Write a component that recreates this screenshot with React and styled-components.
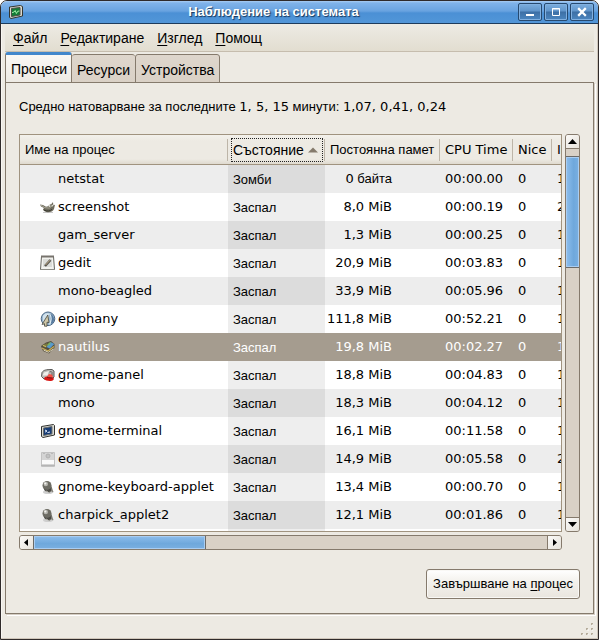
import React from "react";
import styled, { createGlobalStyle } from "styled-components";

const latin = '"DejaVu Sans", sans-serif';
const cyrillic = '"Liberation Sans", sans-serif';

const GlobalStyle = createGlobalStyle`
  * { box-sizing: border-box; }
  body { margin: 0; background: #fff; color: #000; font: 13px/18px ${cyrillic}; }
  button { font: inherit; color: inherit; margin: 0; padding: 0; border: 0; background: none; }
  u { text-decoration-thickness: 1px; text-underline-offset: 2px; text-decoration-skip-ink: none; }
`;

const Window = styled.main`
  min-height: 100vh;
  display: flex;
  flex-direction: column;
  background: #edeae3;
  border: 1px solid #2f2a2a;
  border-radius: 7px 7px 0 0;
  box-shadow: inset -1px -1px #cfc6ba, inset 1px 0 #f8f6f2;
  overflow: hidden;
`;

const TitleBar = styled.header`
  display: grid;
  grid-template-columns: 22px 1fr 77px;
  align-items: center;
  height: 23px;
  padding: 0 4px 0 7px;
  background: linear-gradient(#a9ccf2 0, #80b3ea 2px, #69a3e0 10px, #4b90d5 12px, #5296d8 100%);
  border-bottom: 1px solid #1d3b5c;
`;

const Title = styled.h1`
  margin: 0;
  text-align: center;
  font: bold 13px/20px ${cyrillic};
  color: #fff;
  text-shadow: 1px 1px 1px #16365a;
  white-space: nowrap;
`;

const WindowButtons = styled.div`
  display: flex;
  gap: 2px;
  justify-content: flex-end;
`;

const WindowButton = styled.button`
  width: 24px;
  height: 18px;
  border: 1px solid #26496f;
  border-radius: 2px;
  background: linear-gradient(#7badde 0, #6095cb 7px, #3d6fa5 8px, #4b86c0 100%);
  box-shadow: inset 0 0 0 1px #81b0e0;
  svg { display: block; margin: auto; }
`;

const MenuBar = styled.nav`
  display: flex;
  gap: 13px;
  align-items: center;
  height: 28px;
  margin: 0 4px;
  padding: 0 8px;
  background: linear-gradient(#edebe4, #e2ddd0);
  border-bottom: 1px solid #c6bdae;
`;

const MenuItem = styled.button`
  font-size: 14px;
  line-height: 20px;
`;

const Notebook = styled.section`
  flex: 1;
  display: flex;
  flex-direction: column;
  margin: 0 4px;
`;

const TabStrip = styled.div`
  display: flex;
  align-items: flex-end;
  height: 31px;
  margin-bottom: -1px;
`;

const Tab = styled.button`
  height: ${(p) => (p.$active ? 31 : 29)}px;
  padding: ${(p) => (p.$active ? "0 4px 0 5px" : "3px 5px 0")};
  font-size: 14px;
  border: 1px solid #857a6c;
  border-left-width: ${(p) => (p.$active || p.$last ? 1 : 0)}px;
  border-right-width: ${(p) => (p.$active || p.$last ? 1 : 0)}px;
  border-radius: 3px 3px 0 0;
  background: linear-gradient(#ded6cc, #dad1c6);
  ${(p) => p.$active && `
    border-top: 3px solid #4287cc;
    border-bottom: 0;
    background: linear-gradient(#faf8f5, #edeae3);
  `}
`;

const Panel = styled.div`
  flex: 1;
  display: flex;
  flex-direction: column;
  padding: 14px 13px;
  border: 1px solid #857a6c;
  box-shadow: 1px 1px #d5cec4, 2px 2px #fff;
`;

const LoadAverage = styled.p`
  height: 20px;
  margin: 0 0 17px;
  line-height: 20px;
  white-space: nowrap;
`;

const Latin = styled.span`
  font-family: ${latin};
`;

const ScrollArea = styled.div`
  display: grid;
  grid-template-columns: minmax(0, 1fr) 15px;
  gap: 3px;
`;

const Viewport = styled.div`
  overflow: hidden;
  border: 1px solid #a0937f;
  background: #fff;
`;

const ProcessTable = styled.table`
  width: 680px;
  table-layout: fixed;
  border-collapse: separate;
  border-spacing: 0;
  white-space: nowrap;
`;

const Column = styled.col`
  width: ${(p) => p.$width}px;
`;

const HeaderCell = styled.th`
  height: 30px;
  padding: 0;
  text-align: left;
  font-weight: normal;
  background: linear-gradient(#f3f1ec 0, #edeae3 6px, #edeae3 24px, #dfdacf 100%);
  border-bottom: 1px solid #a0937f;
`;

const HeaderButton = styled.button`
  display: flex;
  align-items: center;
  justify-content: space-between;
  width: 100%;
  height: 22px;
  padding: 0 3px 0 5px;
  border-right: 1px solid #bdb5a8;
  box-shadow: 1px 0 #fff;
`;

const SortFocus = styled.span`
  flex: 1;
  display: flex;
  align-items: center;
  justify-content: space-between;
  height: 24px;
  margin: 0 -2px;
  padding: 0 4px 0 1px;
  border: 1px dotted #222;
  font-size: 14px;
`;

const Row = styled.tr`
  height: 28px;
  background: ${(p) => (p.$selected ? "#a59c8f" : p.$shade ? "#ededed" : "#fff")};
  color: ${(p) => (p.$selected ? "#fff" : "#000")};
  td:nth-child(2) {
    background: ${(p) => (p.$selected ? "#a59c8f" : p.$shade ? "#dcdcdc" : "#eee")};
  }
`;

const FillerRow = styled(Row)`
  height: 2px;
`;

const Cell = styled.td`
  padding: ${(p) => (p.$align === "right" ? "0 48px 0 0" : "0 0 0 5px")};
  text-align: ${(p) => p.$align || "left"};
  font: 13px/18px ${latin};
`;

const StateCell = styled(Cell)`
  padding: 1px 0 0 5px;
  font: 13px/18px ${cyrillic};
`;

const Cyrillic = styled.span`
  font: 13px/18px ${cyrillic};
`;

const ProcessName = styled.div`
  display: flex;
  align-items: center;
  gap: 2px;
  padding-left: 15px;
`;

const IconSlot = styled.span`
  width: 16px;
  height: 16px;
  svg { display: block; }
`;

const Scrollbar = styled.div`
  display: flex;
  flex-direction: ${(p) => (p.$vertical ? "column" : "row")};
  ${(p) => (p.$vertical ? "width" : "height")}: 15px;
  border: 1px solid #857a6c;
  border-radius: 3px;
  overflow: hidden;
  background: #d9d1c6;
`;

const Arrow = styled.button`
  flex: 0 0 13px;
  display: flex;
  align-items: center;
  justify-content: center;
  background: linear-gradient(135deg, #fbfaf8, #e6e2da);
`;

const Trough = styled.div`
  flex: 1;
  display: grid;
  ${(p) => (p.$vertical ? "grid-template-rows" : "grid-template-columns")}: ${(p) => p.$parts};
  border: 0 solid #857a6c;
  border-width: ${(p) => (p.$vertical ? "1px 0" : "0 1px")};
`;

const Thumb = styled.div`
  border: 1px solid #a9cdf2;
  background: linear-gradient(${(p) => (p.$vertical ? "90deg" : "180deg")}, #8abbea, #6fa8dc 60%, #78aee0);
  box-shadow: 0 0 0 1px #6a6a68;
  ${(p) => (p.$vertical ? "grid-row: 2" : "grid-column: 1")};
`;

const Actions = styled.div`
  display: flex;
  justify-content: flex-end;
  margin-top: auto;
`;

const ActionButton = styled.button`
  height: 30px;
  padding: 0 6px;
  border: 1px solid #857a6c;
  border-radius: 3px;
  background: linear-gradient(#fff, #f3f1ec 12px, #e9e5de);
  box-shadow: inset 0 0 0 1px #f9f8f5;
  white-space: nowrap;
`;

const StatusBar = styled.footer`
  display: flex;
  align-items: flex-end;
  justify-content: flex-end;
  height: 25px;
  padding: 0 5px 4px;
  svg { display: block; }
`;

const MonitorIcon = () => (
  <svg width="16" height="16" viewBox="0 0 16 16" aria-hidden="true">
    <path d="M1.500 3 12.500 1.500l2 1V12L3 14.500l-1.500-1z" fill="#d9d8cf" stroke="#34352f" />
    <path d="M3.500 4.500 12 3.500v7.500l-8.500 1.500z" fill="#137d36" stroke="#4d4f46" />
    <path d="M4 8.600 6 8l1.200-1.500 1.200 3 1.400-2.300 1.700-.2" fill="none" stroke="#a5f0a9" />
  </svg>
);

const GimpIcon = () => (
  <svg width="16" height="16" viewBox="0 0 16 16">
    <path d="M3 13.500h10" stroke="#c8c8c8" />
    <path d="M0 5.500 3 6l3 1.700 2-.4 2.200-2L11 5.500l2-2.500.3 3.200 1.700-.5-1 4.200c-1 2.400-3 3.300-6 3.300-2.500 0-4.700-1.100-5.100-2.600L4 9 1 7.400z" fill="#6e6b5d" />
    <path d="m1 6.200 4 2.500 4.300.4L12 7" stroke="#a8a594" fill="none" />
    <circle cx="9.500" cy="7" r="1" fill="#e2e1d8" /><circle cx="12.400" cy="6.600" r=".9" fill="#deddd3" />
    <path d="M4 11c3 1.600 6 1.200 8-.6" stroke="#39382f" fill="none" />
  </svg>
);

const EditIcon = () => (
  <svg width="16" height="16" viewBox="0 0 16 16">
    <path d="M1.500 1.500h12l1 13H.5z" fill="#f2f2ee" stroke="#66665f" />
    <path d="M1 1.500h13" stroke="#77736d" strokeWidth="2" />
    <path d="M3 4h9v8H3z" fill="#dbdcd8" />
    <path d="m5 11 5.500-6" stroke="#55534d" strokeWidth="2.500" />
    <path d="m5.500 10 4.500-4.800" stroke="#c5b18b" />
    <path d="M1 14.500h14" stroke="#8d8d86" />
  </svg>
);

const GlobeIcon = () => (
  <svg width="16" height="16" viewBox="0 0 16 16">
    <circle cx="8" cy="7.800" r="6.800" fill="#9dbad2" stroke="#4c6885" />
    <path d="M9.500 2.200c4 1.800 5.200 5 4 9L11 13z" fill="#55799e" />
    <path d="M3 4.500C5 2 7.500 2 9 2.500v3L3 11z" fill="#d2e2ec" />
    <path d="M9.500 2.500c2 3 2 7 0 11" fill="none" stroke="#e0edf2" strokeWidth="1.200" />
    <path d="M7.800 4 2 13.500l2.500-.8v2.500H7v-4l2 .4z" fill="#cfc7a8" stroke="#4a4a40" strokeWidth=".8" />
  </svg>
);

const NautilusIcon = () => (
  <svg width="16" height="16" viewBox="0 0 16 16">
    <path d="m1 7 5-3.500 5-1.500 3.500 3v4L9 14.500l-6-2.500z" fill="#554e3d" />
    <path d="m2 6.500 4.500-2.300 3.200 1.500-4 3z" fill="#77763f" />
    <path d="m6.500 8 4-5 3.800 2-4.500 4.500z" fill="#589bcd" />
    <path d="m7 6.500 2-3h2L9.500 6z" fill="#7cb55a" />
    <path d="m2 9 6 3 6-4.500" stroke="#c8ad58" fill="none" strokeWidth="1.300" />
    <path d="m3.500 11 5 2.300L13.500 10" stroke="#d9d3bd" fill="none" />
    <path d="m3 6.500 3 1" stroke="#d8c468" />
  </svg>
);

const PanelIcon = () => (
  <svg width="16" height="16" viewBox="0 0 16 16">
    <path d="M2 5.500C3.500 3 6 2.500 12 2.500l2 1.500v6L12 12H4L1.500 9.500z" fill="#bbb9b4" stroke="#5b5a58" />
    <path d="M2.500 8.500 4 5.500l5-1.500-1.500 4.500z" fill="#efeeea" />
    <path d="m9.500 5 2-.5M12 5v4" stroke="#65625f" />
    <path d="M7 9.500 9 7l3.200.8 1 3.200z" fill="#f65045" />
    <path d="M4 12c.5-2 2-2.700 4-2.300l5.500 1.300c1 1.500-.5 3-3.500 3-3 0-5-.7-6-2z" fill="#d91614" />
    <path d="M7 10.200c2 .8 4 .8 5.500.6" stroke="#751814" fill="none" />
  </svg>
);

const TerminalIcon = () => (
  <svg width="16" height="16" viewBox="0 0 16 16">
    <path d="M1.500 3.500 13.500 1.500l1 1v9.500L3 14.500l-1.500-1z" fill="#dbdbd5" stroke="#32332f" />
    <path d="M3.500 5 12 3.500V11l-8.500 1.500z" fill="#173c75" stroke="#6c706e" />
    <path d="m5 7 2 1-2 1.200M7.500 9.500 10 9" stroke="#e9f1ff" fill="none" />
  </svg>
);

const EogIcon = () => (
  <svg width="16" height="16" viewBox="0 0 16 16">
    <path d="M1.500 1.500h13v14h-13z" fill="#d4d4d4" stroke="#c2c2c2" />
    <path d="M2 9h12v4H2z" fill="#fafafa" />
    <path d="M1 14.500h14" stroke="#b5b5b5" />
    <circle cx="8" cy="5" r="2" fill="#c2c2c2" stroke="#b0b0b0" />
    <path d="M3 2.500h2m6 0h2" stroke="#b8b8b8" fill="none" />
  </svg>
);

const AppletIcon = () => (
  <svg width="16" height="16" viewBox="0 0 16 16">
    <ellipse cx="8" cy="13" rx="5" ry="2" fill="#cfcfcf" />
    <path d="M11 6c1 2 1.500 5 2.500 7-1 .5-1.500.2-2-.7L9 14l-2-3z" fill="#85847c" />
    <circle cx="7" cy="6.500" r="4.500" fill="#6d6c64" />
    <path d="M3 8c2 3.500 6.500 3.500 8.500 0L11 12c-2 1.500-4.500 1.500-6.500-.7z" fill="#4b4a45" />
    <circle cx="5.800" cy="5" r="2.200" fill="#b6b5af" /><circle cx="5.300" cy="4.500" r="1.100" fill="#f3f3ef" />
    <path d="m6 12 2 1" stroke="#bab8b0" />
  </svg>
);

const arrows = {
  up: "M0 6h9L4.500 1z",
  down: "M0 1h9L4.500 6z",
  left: "M6 0v7L2 3.500z",
  right: "M3 0v7l4-3.500z",
};

const ArrowButton = ({ direction, label }) => (
  <Arrow type="button" aria-label={label}>
    <svg width="9" height="7" viewBox="0 0 9 7"><path d={arrows[direction]} /></svg>
  </Arrow>
);

const processes = [
  { name: "netstat", memory: "0", cpu: "00:00.00", id: "1" },
  { name: "screenshot", Icon: GimpIcon, memory: "8,0 MiB", cpu: "00:00.19", id: "2" },
  { name: "gam_server", memory: "1,3 MiB", cpu: "00:00.25", id: "1" },
  { name: "gedit", Icon: EditIcon, memory: "20,9 MiB", cpu: "00:03.83", id: "1" },
  { name: "mono-beagled", memory: "33,9 MiB", cpu: "00:05.96", id: "1" },
  { name: "epiphany", Icon: GlobeIcon, memory: "111,8 MiB", cpu: "00:52.21", id: "1" },
  { name: "nautilus", Icon: NautilusIcon, memory: "19,8 MiB", cpu: "00:02.27", id: "1", selected: true },
  { name: "gnome-panel", Icon: PanelIcon, memory: "18,8 MiB", cpu: "00:04.83", id: "1" },
  { name: "mono", memory: "18,3 MiB", cpu: "00:04.12", id: "1" },
  { name: "gnome-terminal", Icon: TerminalIcon, memory: "16,1 MiB", cpu: "00:11.58", id: "1" },
  { name: "eog", Icon: EogIcon, memory: "14,9 MiB", cpu: "00:05.58", id: "2" },
  { name: "gnome-keyboard-applet", Icon: AppletIcon, memory: "13,4 MiB", cpu: "00:00.70", id: "1" },
  { name: "charpick_applet2", Icon: AppletIcon, memory: "12,1 MiB", cpu: "00:01.86", id: "1" },
];

const columnWidths = [208, 97, 115, 73, 39, 148];

export default function App() {
  return (
    <>
      <GlobalStyle />
      <Window>
        <TitleBar>
          <MonitorIcon />
          <Title>Наблюдение на системата</Title>
          <WindowButtons>
            <WindowButton type="button" aria-label="Минимизиране">
              <svg width="12" height="12" viewBox="0 0 12 12"><path d="M2 8h8v2H2z" fill="#fff" /></svg>
            </WindowButton>
            <WindowButton type="button" aria-label="Максимизиране">
              <svg width="12" height="12" viewBox="0 0 12 12"><path d="M2.500 2.500h7v7h-7zM2 3h8" fill="none" stroke="#fff" /></svg>
            </WindowButton>
            <WindowButton type="button" aria-label="Затваряне">
              <svg width="12" height="12" viewBox="0 0 12 12"><path d="m3 3 6 6m0-6L3 9" stroke="#fff" strokeWidth="2.300" strokeLinecap="square" /></svg>
            </WindowButton>
          </WindowButtons>
        </TitleBar>

        <MenuBar>
          <MenuItem type="button"><u>Ф</u>айл</MenuItem>
          <MenuItem type="button"><u>Р</u>едактиране</MenuItem>
          <MenuItem type="button"><u>И</u>зглед</MenuItem>
          <MenuItem type="button"><u>П</u>омощ</MenuItem>
        </MenuBar>

        <Notebook>
          <TabStrip role="tablist">
            <Tab type="button" role="tab" aria-selected="true" $active>Процеси</Tab>
            <Tab type="button" role="tab" aria-selected="false">Ресурси</Tab>
            <Tab type="button" role="tab" aria-selected="false" $last>Устройства</Tab>
          </TabStrip>
          <Panel role="tabpanel">
            <LoadAverage>
              Средно натоварване за последните <Latin>1, 5, 15</Latin> минути: <Latin>1,07, 0,41, 0,24</Latin>
            </LoadAverage>
            <ScrollArea>
              <Viewport>
                <ProcessTable>
                  <colgroup>
                    {columnWidths.map((width, i) => <Column key={i} $width={width} />)}
                  </colgroup>
                  <thead>
                    <tr>
                      <HeaderCell><HeaderButton type="button">Име на процес</HeaderButton></HeaderCell>
                      <HeaderCell aria-sort="ascending">
                        <HeaderButton type="button">
                          <SortFocus>
                            Състояние
                            <svg width="10" height="6" viewBox="0 0 10 6"><path d="M0 5.500h10L5 .5z" fill="#857a6c" /></svg>
                          </SortFocus>
                        </HeaderButton>
                      </HeaderCell>
                      <HeaderCell><HeaderButton type="button">Постоянна памет</HeaderButton></HeaderCell>
                      <HeaderCell><HeaderButton type="button"><Latin>CPU Time</Latin></HeaderButton></HeaderCell>
                      <HeaderCell><HeaderButton type="button"><Latin>Nice</Latin></HeaderButton></HeaderCell>
                      <HeaderCell><HeaderButton type="button"><Latin>ID</Latin></HeaderButton></HeaderCell>
                    </tr>
                  </thead>
                  <tbody>
                    {processes.map(({ name, Icon, memory, cpu, id, selected }, i) => (
                      <Row key={name} $shade={i % 2 === 0} $selected={selected} aria-selected={!!selected}>
                        <Cell>
                          <ProcessName>
                            <IconSlot aria-hidden="true">{Icon && <Icon />}</IconSlot>
                            {name}
                          </ProcessName>
                        </Cell>
                        <StateCell>{i === 0 ? "Зомби" : "Заспал"}</StateCell>
                        <Cell $align="right">{memory}{i === 0 && <Cyrillic> байта</Cyrillic>}</Cell>
                        <Cell>{cpu}</Cell>
                        <Cell>0</Cell>
                        <Cell>{id}</Cell>
                      </Row>
                    ))}
                    <FillerRow aria-hidden="true"><td /><td /><td /><td /><td /><td /></FillerRow>
                  </tbody>
                </ProcessTable>
              </Viewport>
              <Scrollbar $vertical>
                <ArrowButton direction="up" label="Нагоре" />
                <Trough $vertical $parts="8fr 110fr 250fr"><Thumb $vertical /></Trough>
                <ArrowButton direction="down" label="Надолу" />
              </Scrollbar>
              <Scrollbar>
                <ArrowButton direction="left" label="Наляво" />
                <Trough $parts="1fr 2fr"><Thumb /></Trough>
                <ArrowButton direction="right" label="Надясно" />
              </Scrollbar>
            </ScrollArea>
            <Actions>
              <ActionButton type="button">Завършване на <u>п</u>роцес</ActionButton>
            </Actions>
          </Panel>
        </Notebook>

        <StatusBar>
          <svg width="12" height="12" viewBox="0 0 12 12" aria-hidden="true">
            <path d="M10 1h2M5 6h2m3 0h2M0 11h2m3 0h2m3 0h2" stroke="#b5ac9b" strokeWidth="2" />
            <path d="M11 2h2M6 7h2m3 0h2M1 12h2m3 0h2m3 0h2" stroke="#fff" />
          </svg>
        </StatusBar>
      </Window>
    </>
  );
}
